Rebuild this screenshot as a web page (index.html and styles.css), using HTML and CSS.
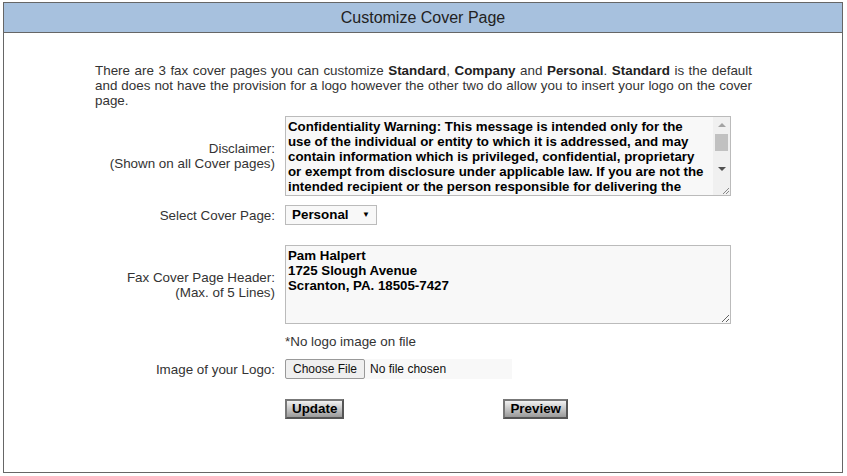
FILE: index.html
```html
<!DOCTYPE html>
<html lang="en">

<head>
    <meta charset="UTF-8">
    <meta name="viewport" content="width=device-width, initial-scale=1.0">
    <title>Customize Cover Page</title>
    <link rel="stylesheet" href="styles.css">
</head>

<body>
    <div class="cover-panel">
        <div class="cover-title">Customize Cover Page</div>
        <div class="cover-body">
            <p class="intro">There are 3 fax cover pages you can customize <b>Standard</b>, <b>Company</b> and <b>Personal</b>. <b>Standard</b> is the default and does not have the provision for a logo however the other two do allow you to insert your logo on the cover page.</p>
            <form class="cover-form">
                <div class="row">
                    <label class="lbl">Disclaimer:<br>(Shown on all Cover pages)</label>
                    <div class="disclaimer-box">
                        <textarea class="disclaimer">Confidentiality Warning: This message is intended only for the use of the individual or entity to which it is addressed, and may contain information which is privileged, confidential, proprietary or exempt from disclosure under applicable law. If you are not the intended recipient or the person responsible for delivering the message to the intended recipient, you are strictly prohibited from disclosing, distributing, copying, or in any way using this message.</textarea>
                        <div class="scrollbar">
                            <span class="sb-btn up"></span>
                            <span class="sb-thumb"></span>
                            <span class="sb-track"></span>
                            <span class="sb-btn down"></span>
                            <span class="sb-corner">
                                <svg width="10" height="10" viewBox="0 0 10 10"><path d="M9 3L3 9M9 6L6 9" stroke="#888" stroke-width="1"/></svg>
                            </span>
                        </div>
                    </div>
                </div>
                <div class="row mt9">
                    <label class="lbl">Select Cover Page:</label>
                    <div class="select-box">Personal <span class="arrow">&#9660;</span></div>
                </div>
                <div class="row mt20">
                    <label class="lbl">Fax Cover Page Header:<br>(Max. of 5 Lines)</label>
                    <textarea class="header-text">Pam Halpert
1725 Slough Avenue
Scranton, PA. 18505-7427</textarea>
                </div>
                <div class="row mt10">
                    <span></span>
                    <div class="note">*No logo image on file</div>
                </div>
                <div class="row mt10">
                    <label class="lbl">Image of your Logo:</label>
                    <div class="file-box"><span class="file-btn">Choose File</span>No file chosen</div>
                </div>
                <div class="row mt20">
                    <span></span>
                    <div class="actions">
                        <button type="button" class="btn">Update</button>
                        <button type="button" class="btn">Preview</button>
                    </div>
                </div>
            </form>
        </div>
    </div>
</body>

</html>
```

FILE: styles.css
```css
body {
    margin: 0;
    padding: 2px 0 0 3px;
    background-color: #fff;
    font-family: "Liberation Sans", Arial, sans-serif;
}

.cover-panel {
    width: 838px;
    height: 469px;
    border: 1px solid #666;
}

.cover-title {
    height: 29px;
    border-bottom: 1px solid #666;
    background-color: #a7c1de;
    color: #222;
    font-size: 16px;
    line-height: 29px;
    text-align: center;
}

.cover-body {
    padding: 30px 0 0 91px;
}

.intro {
    width: 657px;
    margin: 0;
    color: #333;
    font-size: 13.4px;
    line-height: 15px;
    text-align: justify;
}

.intro b {
    color: #222;
}

.cover-form {
    margin-top: 8px;
}

.row {
    display: grid;
    grid-template-columns: 180px 446px;
    column-gap: 10px;
    align-items: center;
}

.mt9 {
    margin-top: 9px;
}

.mt10 {
    margin-top: 10px;
}

.mt20 {
    margin-top: 20px;
}

.lbl {
    text-align: right;
    color: #333;
    font-size: 13.4px;
    line-height: 15px;
}

textarea {
    box-sizing: border-box;
    width: 446px;
    margin: 0;
    padding: 2px 2px;
    border: 1px solid #bbb;
    background-color: #f8f8f8;
    color: #000;
    font: bold 13.3px/15px "Liberation Sans", Arial, sans-serif;
}

.disclaimer-box {
    box-sizing: border-box;
    width: 446px;
    height: 80px;
    border: 1px solid #bbb;
    background-color: #f8f8f8;
    display: flex;
}

.disclaimer-box .disclaimer {
    flex: 1;
    width: auto;
    height: 100%;
    padding-right: 8px;
    border: none;
    overflow: hidden;
    resize: none;
}

.scrollbar {
    width: 17px;
    display: flex;
    flex-direction: column;
    background-color: #f0f0f0;
}

.sb-btn {
    height: 16px;
    display: flex;
    align-items: center;
    justify-content: center;
}

.sb-btn::after {
    content: "";
    border-left: 4px solid transparent;
    border-right: 4px solid transparent;
}

.up::after {
    border-bottom: 4px solid #a3a3a3;
}

.down::after {
    border-top: 4px solid #505050;
}

.sb-thumb {
    height: 17px;
    margin: 1px 2px 0;
    background-color: #c1c1c1;
}

.sb-track {
    flex: 1;
}

.sb-corner {
    height: 18px;
    display: flex;
    align-items: flex-end;
    justify-content: flex-end;
}

.header-text {
    height: 79px;
}

.select-box {
    box-sizing: border-box;
    width: 92px;
    height: 20px;
    padding: 0 6px;
    border: 1px solid #bbb;
    background-color: #f8f8f8;
    color: #000;
    font-weight: bold;
    font-size: 13.4px;
    line-height: 18px;
    display: flex;
    justify-content: space-between;
}

.arrow {
    font-size: 8px;
}

.note {
    color: #333;
    font-size: 13.4px;
    line-height: 15px;
}

.file-box {
    width: 227px;
    height: 20px;
    background-color: #f8f8f8;
    font-size: 12px;
    line-height: 20px;
    color: #111;
    display: flex;
    align-items: center;
    gap: 5px;
}

.file-btn {
    box-sizing: border-box;
    height: 20px;
    padding: 0 7px;
    border: 1px solid #999;
    border-radius: 2px;
    background-color: #efefef;
    line-height: 18px;
}

.actions {
    display: flex;
    gap: 159px;
}

.btn {
    height: 20px;
    padding: 0 5px;
    border: 2px solid #555;
    border-top-color: #777;
    border-left-color: #777;
    background: linear-gradient(#f2f2f2, #9a9a9a);
    color: #000;
    font: bold 13.4px/16px "Liberation Sans", Arial, sans-serif;
}
```
